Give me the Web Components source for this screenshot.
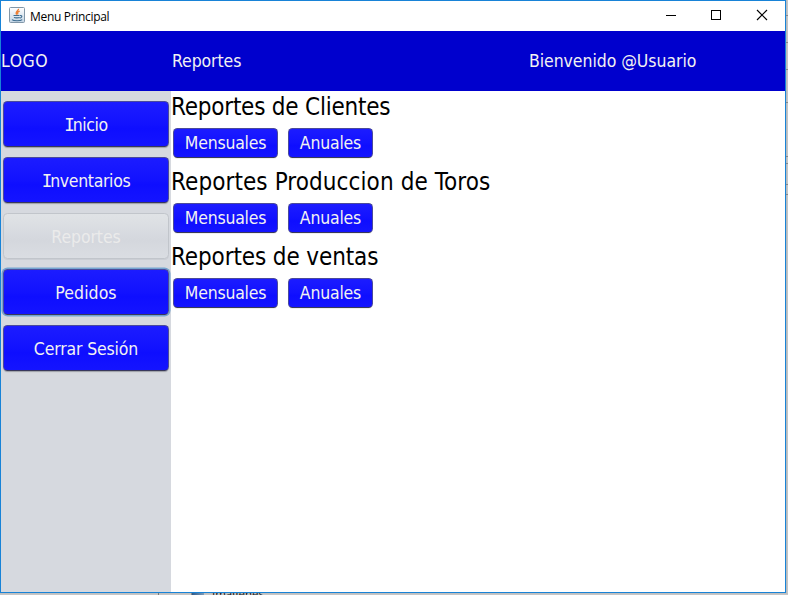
<!DOCTYPE html>
<html lang="es">
<head>
<meta charset="utf-8">
<title>Menu Principal</title>
<style>
html,body{margin:0;width:788px;height:595px;overflow:hidden;background:#c4c4c4}
body{font-family:"DejaVu Sans Condensed","DejaVu Sans",sans-serif;font-stretch:condensed}
</style>
</head>
<body>
<app-desktop>
  <app-window>
    <title-bar slot="title" label="Menu Principal"></title-bar>
    <app-header slot="header">
      <fit-text w="47">LOGO</fit-text>
      <fit-text w="69">Reportes</fit-text>
      <fit-text w="167">Bienvenido @Usuario</fit-text>
    </app-header>
    <side-menu slot="side">
      <nimbus-button><fit-text w="43" serif>Inicio</fit-text></nimbus-button>
      <nimbus-button><fit-text w="88" serif>Inventarios</fit-text></nimbus-button>
      <nimbus-button disabled><fit-text w="69">Reportes</fit-text></nimbus-button>
      <nimbus-button focused><fit-text w="61">Pedidos</fit-text></nimbus-button>
      <nimbus-button><fit-text w="104">Cerrar Sesión</fit-text></nimbus-button>
    </side-menu>
    <report-group label="Reportes de Clientes" w="219"></report-group>
    <report-group label="Reportes Produccion de Toros" w="319"></report-group>
    <report-group label="Reportes de ventas" w="207"></report-group>
  </app-window>
</app-desktop>
<script>
const define = (name, html, setup) => customElements.define(name, class extends HTMLElement {
  connectedCallback() {
    if (this.shadowRoot) return;
    const t = document.createElement('template');
    t.innerHTML = html;
    this.attachShadow({mode: 'open'}).append(t.content.cloneNode(true));
    if (setup) setup(this, this.shadowRoot);
  }
});

// Desktop strip visible to the right of and below the window
define('app-desktop', `<style>
:host{display:grid;grid-template:593px 2px / 786px 2px;width:788px;height:595px}
.right{background:linear-gradient(90deg,#b4b8ba,#c9c9c9)}
.right svg{display:block}
.below{grid-column:1/3;display:flex;overflow:hidden;height:2px;background:linear-gradient(#bdbdbd,#c9c9c9);font:11.500px/14px "Open Sans",sans-serif;color:#111}
.a{width:158px;border-right:1px solid #777}
.b{width:32px;border-right:1px solid #888}
.c{width:12px;background:linear-gradient(90deg,#2f5c8c,#7d9bb8);margin-right:8px}
.t{margin-top:-6px;height:14px}
</style><slot></slot><div class="right"><svg width="2" height="593"><path d="M0 15.5h2M0 42.5h2M0 69.5h2M0 102.5h2M0 156.5h2M0 163.5h2M0 184.5h2M0 194.5h2" stroke="#888"/></svg></div>
<div class="below"><div class="a"></div><div class="b"></div><div class="c"></div><div class="t">Imagenes</div></div>`);

define('app-window', `<style>
:host{display:grid;box-sizing:border-box;width:786px;height:593px;border:1px solid #1883d7;grid-template:30px 60px 1fr / 170px 1fr;background:#fff;overflow:hidden}
.bar,.head{grid-column:1/3}
.main{display:flex;flex-direction:column}
</style><div class="bar"><slot name="title"></slot></div><div class="head"><slot name="header"></slot></div>
<slot name="side"></slot><div class="main"><slot></slot></div>`);

define('title-bar', `<style>
:host{display:flex;align-items:center;height:30px;background:#fff;padding-left:8px;box-sizing:border-box}
.label{margin:-2px 0 0 5px;flex:1;--size:12px;font-family:"Open Sans","Noto Sans",sans-serif;font-stretch:normal;color:#000}
.controls{display:block}
.java{display:block;margin-top:-2px}
</style>
<svg class="java" width="16" height="16" viewBox="0 0 16 16">
<defs><linearGradient id="g" x2="0" y2="1"><stop stop-color="#fff"/><stop offset="1" stop-color="#c3d5e5"/></linearGradient></defs>
<rect x=".5" y=".5" width="15" height="15" rx="1" fill="url(#g)" stroke="#8297a8"/>
<path d="M9.500 1.700C10 3.600 5.600 4.300 7.700 7.600M10.700 4.200C8.500 5 8 5.800 9 7.300" fill="none" stroke="#ed8036" stroke-width="1.400"/>
<path d="M4.500 8.500h6M5 10.400c1 .6 4.500.6 5.500 0M3 12.600c1.500 1.500 8.500 1.500 10.200 0M11 8.500c2.500-.3 2.500 2-.3 2.600" fill="none" stroke="#3d6c8f" stroke-width="1.100"/>
</svg>
<fit-text class="label" w="79"></fit-text>
<svg class="controls" width="138" height="30" fill="none" stroke="#000">
<path d="M19 14.500h10"/><rect x="64.500" y="9.500" width="9" height="9"/><path d="M110 9l10 10M120 9l-10 10" stroke-width="1.150"/></svg>`,
(el, root) => {
  root.querySelector('fit-text').textContent = el.getAttribute('label');
});

define('app-header', `<style>
:host{display:grid;grid-template-columns:171px 357px 1fr;align-items:center;height:60px;background:#0000cd;color:#f2f2f2}
</style><slot></slot>`);

define('side-menu', `<style>
:host{display:flex;flex-direction:column;gap:10px;background:#d6d9df;padding:10px 2px;box-sizing:border-box;--drop:2px}
</style><slot></slot>`);

define('nimbus-button', `<style>
:host{display:flex;align-items:center;justify-content:center;box-sizing:border-box;height:46px;padding-top:var(--drop,1px);border-radius:4.500px;border:1px solid #4a4a9c;border-bottom-color:#38385c;
background:linear-gradient(#1c1cff,#1212ff 50%,#0e0eff 60%,#1414ff);color:#f2f2f2;box-shadow:0 1px 1px #777a8099}
:host([small]){height:30px;box-shadow:0 1px 0 #0001}
:host([disabled]){color:#ebebeb;border-color:#c1c5cb;background:linear-gradient(#e0e3e6,#d6d9df 50%,#d4d7dd 60%,#dadde2);box-shadow:0 1px 0 #cbced4}
:host([focused]){box-shadow:0 0 0 1.500px #73a4d1}
</style><slot></slot>`);

define('report-group', `<style>
:host{display:block;height:75px}
h2{margin:0;height:32px;font-weight:normal;display:flex;align-items:center;--size:24px;color:#000}
.row{display:flex;gap:10px;padding:5px 2px}
.m{width:105px}.y{width:85px}
</style><h2><fit-text></fit-text></h2><div class="row"><nimbus-button small class="m"><fit-text w="81">Mensuales</fit-text></nimbus-button><nimbus-button small class="y"><fit-text w="61">Anuales</fit-text></nimbus-button></div>`,
(el, root) => {
  const t = root.querySelector('h2 fit-text');
  t.textContent = el.getAttribute('label');
  t.setAttribute('w', el.getAttribute('w'));
});

// Text label whose tracking is adjusted so that it spans the width given by w
define('fit-text', `<style>
:host{display:block;white-space:nowrap}
span{display:inline-block;font-size:var(--size,17.500px);line-height:1.200}
:host([serif]) span::first-letter{font-family:"DejaVu Sans Mono",monospace;letter-spacing:-2px}
</style><span></span>`, (el, root) => {
  const span = root.querySelector('span');
  span.textContent = el.textContent;
  const natural = span.getBoundingClientRect().width;
  const n = span.textContent.length;
  span.style.letterSpacing = ((Number(el.getAttribute('w')) + .3 - natural) / n) + 'px';
});
</script>
</body>
</html>
